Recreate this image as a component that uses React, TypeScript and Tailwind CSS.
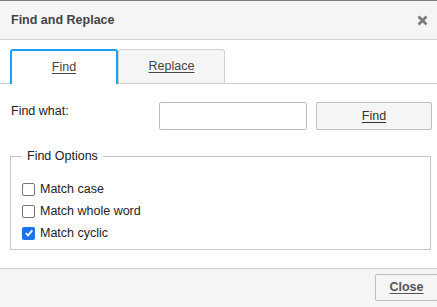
export default function App() {
  return (
    <div
      className="relative flex h-[307px] w-[437px] flex-col overflow-hidden border-t border-[#7a7a7a] bg-white text-[12.5px] text-[#222]"
      style={{ fontFamily: '"Liberation Sans", Arial, sans-serif' }}
    >
      {/* header */}
      <div className="flex h-[39px] shrink-0 items-center justify-between border-b border-[#d0d0d0] bg-[#f5f5f5] pl-[11px] pr-[10px]">
        <span className="font-bold text-[#444]">Find and Replace</span>
        <svg width="11" height="11" viewBox="0 0 11 11" className="-mr-px mt-[1px]">
          <path d="M1.5 1.5 L9.5 9.5 M9.5 1.5 L1.5 9.5" stroke="#7a7a7a" strokeWidth="2.6" />
        </svg>
      </div>

      {/* tabs */}
      <div className="flex h-[44px] shrink-0 items-end border-b border-[#cfcfcf] pl-[10px]">
        <div className="-mb-px flex h-[35px] w-[108px] items-center justify-center rounded-t-[3px] border-2 border-b-0 border-[#1a9fff] bg-white">
          <span className="underline underline-offset-2 text-[#444]">Find</span>
        </div>
        <div className="flex h-[34px] w-[107px] items-center justify-center rounded-t-[3px] border border-b-0 border-[#d0d0d0] bg-[#f5f5f5]">
          <span className="underline underline-offset-2 text-[#444]">Replace</span>
        </div>
      </div>

      {/* find row */}
      <div className="mt-[18px] flex h-[28px] items-center pl-[11px]">
        <span className="w-[148px] -translate-y-[5px]">Find what:</span>
        <div className="h-[28px] w-[148px] rounded-[2px] border border-[#bdbdbd] bg-white" />
        <div className="ml-[9px] flex h-[28px] w-[116px] items-center justify-center rounded-[2px] border border-[#bdbdbd] bg-[#f5f5f5]">
          <span className="underline underline-offset-2 text-[#333]">Find</span>
        </div>
      </div>

      {/* options */}
      <fieldset className="mx-[10px] mt-[17px] h-[103px] w-[421px] border border-[#c4c4c4] px-[11px] pt-[17px]">
        <legend className="px-[5px] text-[#222]">Find Options</legend>
        <div className="flex flex-col gap-[9px]">
          {[
            ['Match case', false],
            ['Match whole word', false],
            ['Match cyclic', true],
          ].map(([label, checked]) => (
            <div key={label as string} className="flex h-[13px] items-center gap-[5px]">
              {checked ? (
                <span className="flex h-[13px] w-[13px] items-center justify-center rounded-[2px] bg-[#1a73e8]">
                  <svg width="10" height="10" viewBox="0 0 10 10">
                    <path d="M1.8 5.2 L4 7.4 L8.3 2.4" fill="none" stroke="white" strokeWidth="1.8" />
                  </svg>
                </span>
              ) : (
                <span className="h-[13px] w-[13px] rounded-[2px] border border-[#767676] bg-white" />
              )}
              <span>{label as string}</span>
            </div>
          ))}
        </div>
      </fieldset>

      {/* footer */}
      <div className="mt-auto flex h-[39px] shrink-0 items-start justify-end border-t border-[#d0d0d0] bg-[#f5f5f5] pt-[5px]">
        <div className="-mr-px flex h-[27px] w-[63px] items-center justify-center rounded-[2px] border border-[#bdbdbd] bg-[#f5f5f5]">
          <span className="font-bold underline underline-offset-2 text-[#555]">Close</span>
        </div>
      </div>
    </div>
  );
}
